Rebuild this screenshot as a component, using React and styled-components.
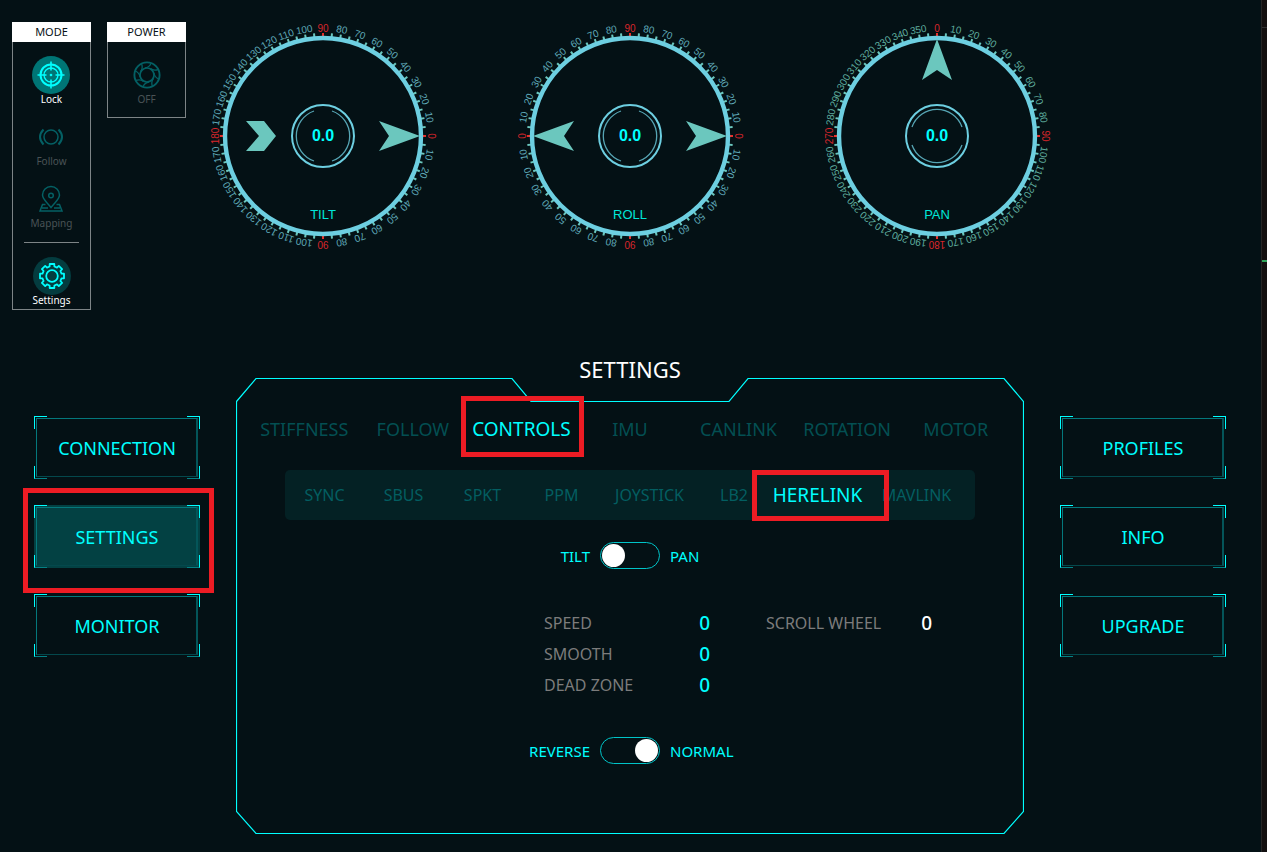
import React, { useState } from "react";
import styled, { createGlobalStyle } from "styled-components";

const CYAN = "#00ffff";
const RING = "#6dcfe1";
const ARROW = "#6bc7be";

// labels run clockwise from the top, one every 10 degrees
const TILT_LABELS = [
  90, 80, 70, 60, 50, 40, 30, 20, 10, 0, 10, 20, 30, 40, 50, 60, 70, 80, 90,
  100, 110, 120, 130, 140, 150, 160, 170, 180, 170, 160, 150, 140, 130, 120, 110, 100,
];
const ROLL_LABELS = [
  90, 80, 70, 60, 50, 40, 30, 20, 10, 0, 10, 20, 30, 40, 50, 60, 70, 80, 90,
  80, 70, 60, 50, 40, 30, 20, 10, 0, 10, 20, 30, 40, 50, 60, 70, 80,
];
const PAN_LABELS = Array.from({ length: 36 }, (_, i) => i * 10);

const Dial = ({ name, value, labels, labelColor, vertical, children }) => (
  <DialSvg viewBox="-120 -120 240 240" role="img" aria-label={name}>
    {Array.from({ length: 72 }, (_, i) => (
      <line
        key={i}
        y1={-103}
        y2={-99}
        stroke={i % 18 === 0 ? "#e8302a" : ARROW}
        strokeWidth={2}
        transform={`rotate(${i * 5})`}
      />
    ))}
    <circle r={98} fill="none" stroke={RING} strokeWidth={4.4} />
    {labels.map((label, i) => (
      <text
        key={i}
        y={-104.5}
        textAnchor="middle"
        fontSize={10}
        fill={i % 9 === 0 ? "#d8262c" : labelColor}
        transform={`rotate(${i * 10})`}
      >
        {label}
      </text>
    ))}
    {children}
    <circle r={31} fill="none" stroke={RING} strokeWidth={2} />
    <g fill="none" stroke="#56a5b4" strokeWidth={1.3} transform={vertical ? "rotate(90)" : undefined}>
      <path d="M-9 -25 A26.5 26.5 0 0 0 -9 25" />
      <path d="M9 -25 A26.5 26.5 0 0 1 9 25" />
    </g>
    <text y={5} textAnchor="middle" fontSize={16} fontWeight="bold" fill={CYAN}>
      {value}
    </text>
    <text y={83} textAnchor="middle" fontSize={13} fill="#00e6d8">
      {name}
    </text>
  </DialSvg>
);

const Arrow = ({ angle }) => (
  <path d="M0 -97 L15 -56 L0 -66 L-15 -56 Z" fill={ARROW} transform={`rotate(${angle})`} />
);

const LockIcon = () => (
  <Icon viewBox="0 0 28 28">
    <circle cx="14" cy="14" r="10.5" strokeWidth="2" />
    <circle cx="14" cy="14" r="7" strokeWidth="1.3" />
    <path d="M14 .5v9M14 18.500v9M.5 14h9M18.500 14h9" strokeWidth="1.600" />
    <circle cx="14" cy="14" r=".6" />
  </Icon>
);

const FollowIcon = () => (
  <Icon viewBox="0 0 28 28">
    <circle cx="14" cy="14" r="7" />
    <path d="M6.500 6.500Q-.5 14 6.500 21.500M21.500 6.500Q28.500 14 21.500 21.500" strokeWidth="2" />
  </Icon>
);

const MappingIcon = () => (
  <Icon viewBox="0 0 28 28">
    <path d="M14 22.500C9 16 5.500 14 5.500 10a8.500 8.500 0 0 1 17 0C22.500 14 19 16 14 22.500Z" />
    <circle cx="14" cy="10.5" r="2.3" />
    <path d="M8.500 19.500H5.500L3 26h22l-2.500-6.500h-3M5 23h6M17 23h6" />
  </Icon>
);

// eight teeth, four corners each
const GEAR = Array.from({ length: 8 }, (_, i) =>
  [[9.8, -14], [12.2, -11], [12.2, 11], [9.8, 14]]
    .map(([r, offset]) => {
      const a = ((i * 45 + offset) * Math.PI) / 180;
      return `${(14 + r * Math.sin(a)).toFixed(1)},${(14 - r * Math.cos(a)).toFixed(1)}`;
    })
    .join(" ")
).join(" ");

const GearIcon = () => (
  <Icon viewBox="0 0 28 28">
    <circle cx="14" cy="14" r="5.8" strokeWidth="1.8" />
    <polygon points={GEAR} strokeWidth="1.8" strokeLinejoin="round" />
  </Icon>
);

const PowerIcon = () => (
  <Icon viewBox="0 0 28 28">
    <circle cx="14" cy="14" r="12.6" strokeWidth="1.9" />
    <circle cx="14" cy="14" r="7" strokeWidth="1.7" />
    {[0, 45, 90, 135, 180, 225, 270, 315].map((angle) => (
      <path key={angle} d="M12 7Q16 6.500 18 2.500" strokeWidth="1.3" transform={`rotate(${angle} 14 14)`} />
    ))}
  </Icon>
);

const MODES = [
  { name: "Lock", icon: <LockIcon />, glow: "#007575" },
  { name: "Follow", icon: <FollowIcon /> },
  { name: "Mapping", icon: <MappingIcon /> },
];

const TABS = ["STIFFNESS", "FOLLOW", "CONTROLS", "IMU", "CANLINK", "ROTATION", "MOTOR"];
const SOURCES = ["SYNC", "SBUS", "SPKT", "PPM", "JOYSTICK", "LB2", "HERELINK", "MAVLINK"];
const VALUES = ["SPEED", "SMOOTH", "DEAD ZONE"];

const Frame = ({ label, active }) => (
  <FrameButton type="button" $active={active}>
    <Corners aria-hidden="true">
      <i />
      <i />
      <i />
      <i />
    </Corners>
    {label}
    {active && <Highlight $inset="-17px -14px -25px -11px" />}
  </FrameButton>
);

const Toggle = ({ id, left, right, initial }) => {
  const [on, setOn] = useState(initial);
  return (
    <ToggleRow>
      <ToggleText htmlFor={id} $end>{left}</ToggleText>
      <Switch id={id} type="checkbox" role="switch" checked={on} onChange={() => setOn(!on)} />
      <ToggleText htmlFor={id}>{right}</ToggleText>
    </ToggleRow>
  );
};

export default function App() {
  const [tab, setTab] = useState("CONTROLS");
  const [source, setSource] = useState("HERELINK");

  return (
    <>
      <GlobalStyle />
      <Page>
        <Top>
          <Panels>
            <Panel>
              <PanelTitle>MODE</PanelTitle>
              <ModeList>
                {MODES.map((mode) => (
                  <ModeButton key={mode.name} type="button" $active={!!mode.glow}>
                    <IconDisc $glow={mode.glow}>{mode.icon}</IconDisc>
                    {mode.name}
                  </ModeButton>
                ))}
              </ModeList>
              <Divider />
              <ModeButton type="button" $active>
                <IconDisc $glow="#043c3f"><GearIcon /></IconDisc>
                Settings
              </ModeButton>
            </Panel>
            <Panel $short>
              <PanelTitle>POWER</PanelTitle>
              <ModeList>
                <ModeButton type="button">
                  <IconDisc><PowerIcon /></IconDisc>
                  OFF
                </ModeButton>
              </ModeList>
            </Panel>
          </Panels>
          <Dials>
            <Dial name="TILT" value="0.0" labels={TILT_LABELS} labelColor="#5fa9b8">
              <Arrow angle={90} />
              <path d="M-77 -15h18l12 15-12 15h-18l13-15Z" fill={ARROW} />
            </Dial>
            <Dial name="ROLL" value="0.0" labels={ROLL_LABELS} labelColor="#5fa9b8">
              <Arrow angle={90} />
              <Arrow angle={270} />
            </Dial>
            <Dial name="PAN" value="0.0" labels={PAN_LABELS} labelColor="#5fae9f" vertical>
              <Arrow angle={0} />
            </Dial>
          </Dials>
        </Top>
        <Main>
          <SideNav aria-label="Device">
            <Frame label="CONNECTION" />
            <Frame label="SETTINGS" active />
            <Frame label="MONITOR" />
          </SideNav>
          <Settings>
            <Title>SETTINGS</Title>
            <Outline viewBox="0 0 788 458" preserveAspectRatio="none" aria-hidden="true">
              <path d="M.5 24.500L20 1.500H276L295 24.500H493L512 1.500H768L787.500 24.500V434.500L768 456.500H20L.5 434.500Z" />
            </Outline>
            <Tabs>
              {TABS.map((name) => (
                <Tab key={name} type="button" $active={name === tab} onClick={() => setTab(name)}>
                  {name}
                  {name === "CONTROLS" && <Highlight $inset="-19px -8px -14px -6px" />}
                </Tab>
              ))}
            </Tabs>
            <Sources>
              {SOURCES.map((name) => (
                <Source key={name} type="button" $active={name === source} onClick={() => setSource(name)}>
                  {name}
                  {name === "HERELINK" && <Highlight $inset="-11px -24px -12px -18px" />}
                </Source>
              ))}
            </Sources>
            <Toggle id="axis" left="TILT" right="PAN" initial={false} />
            <Values>
              <ValueList>
                {VALUES.map((name) => (
                  <ValueRow key={name}>
                    <dt>{name}</dt>
                    <dd>0</dd>
                  </ValueRow>
                ))}
              </ValueList>
              <ValueList>
                <ValueRow $plain>
                  <dt>SCROLL WHEEL</dt>
                  <dd>0</dd>
                </ValueRow>
              </ValueList>
            </Values>
            <Toggle id="direction" left="REVERSE" right="NORMAL" initial />
          </Settings>
          <SideNav aria-label="System">
            <Frame label="PROFILES" />
            <Frame label="INFO" />
            <Frame label="UPGRADE" />
          </SideNav>
        </Main>
        <Edge />
      </Page>
    </>
  );
}

const GlobalStyle = createGlobalStyle`
  * {
    box-sizing: border-box;
  }
  body {
    margin: 0;
    background: #041115;
    color: #fff;
    font-family: "Noto Sans", Tahoma, sans-serif;
  }
  button {
    font-family: inherit;
    padding: 0;
    border: none;
    background: none;
    cursor: pointer;
  }
`;

const Page = styled.div`
  position: relative;
  min-height: 100vh;
  padding: 16px 41px 16px 12px;
`;

/* strip of the neighbouring window */
const Edge = styled.div`
  position: absolute;
  top: 0;
  right: 0;
  bottom: 0;
  width: 6px;
  border-left: 1px solid #252525;
  background:
    linear-gradient(#2fa35a, #2fa35a) 0 260px / 100% 2px no-repeat,
    linear-gradient(#303030, #303030) 0 27px / 100% 1px no-repeat,
    #131010;
`;

const Top = styled.header`
  display: flex;
  align-items: flex-start;
  height: 344px;
`;

const Panels = styled.div`
  display: flex;
  align-items: flex-start;
  gap: 16px;
  padding-top: 6px;
`;

const Panel = styled.section`
  display: flex;
  flex-direction: column;
  align-items: center;
  width: 79px;
  height: ${(p) => (p.$short ? "96px" : "288px")};
  border: 1px solid #7d8486;
`;

const PanelTitle = styled.h2`
  align-self: stretch;
  margin: -1px -1px 0;
  background: #fff;
  color: #071216;
  font-size: 11px;
  font-weight: 400;
  line-height: 20px;
  text-align: center;
`;

const ModeList = styled.div`
  display: flex;
  flex-direction: column;
  gap: 14px;
  padding-top: 14px;
`;

const ModeButton = styled.button`
  display: flex;
  flex-direction: column;
  align-items: center;
  color: ${(p) => (p.$active ? "#fff" : "#4a5355")};
  font-size: 10px;
  line-height: 10px;
  svg {
    color: ${(p) => (p.$active ? CYAN : "#046064")};
  }
`;

const IconDisc = styled.span`
  display: grid;
  place-items: center;
  width: 38px;
  height: 38px;
  border-radius: 50%;
  background: ${(p) => p.$glow || "transparent"};
`;

const Icon = styled.svg`
  width: 28px;
  height: 28px;
  fill: none;
  stroke: currentColor;
  stroke-width: 1.5;
`;

const Divider = styled.hr`
  width: 55px;
  margin: 14px 0;
  border: 0;
  border-top: 1px solid #7d8486;
`;

const Dials = styled.div`
  display: flex;
  flex: 1;
  justify-content: space-between;
  margin: 0 169px 0 17px;
`;

const DialSvg = styled.svg`
  width: 240px;
  height: 240px;
  font-family: "Liberation Sans", Arial, sans-serif;
`;

const Main = styled.main`
  display: flex;
  justify-content: space-between;
  align-items: flex-start;
  padding-left: 22px;
`;

const SideNav = styled.nav`
  display: flex;
  flex-direction: column;
  gap: 26px;
  width: 166px;
  padding-top: 56px;
`;

const FrameButton = styled.button`
  position: relative;
  height: 63px;
  color: ${CYAN};
  font-size: 18px;
  background: ${(p) => (p.$active ? "#034143" : "transparent")};
  &::before {
    content: "";
    position: absolute;
    inset: 2px;
    border: 1px solid #04787c;
    border-right: 2px solid #045559;
    border-bottom-color: #04484c;
  }
`;

const Corners = styled.span`
  i {
    position: absolute;
    width: 13px;
    height: 13px;
    border: 0 solid ${CYAN};
  }
  i:nth-child(1) {
    top: 0;
    left: 0;
    border-width: 1px 0 0 1px;
  }
  i:nth-child(2) {
    top: 0;
    right: 0;
    border-width: 1px 1px 0 0;
  }
  i:nth-child(3) {
    bottom: 0;
    left: 0;
    border-width: 0 0 1px 1px;
    border-bottom-color: #038084;
  }
  i:nth-child(4) {
    right: 0;
    bottom: 0;
    border-width: 0 1px 1px 0;
    border-bottom-color: #038084;
  }
`;

const Highlight = styled.span`
  position: absolute;
  z-index: 1;
  inset: ${(p) => p.$inset};
  border: 5px solid #ed1c24;
  pointer-events: none;
`;

const Settings = styled.section`
  position: relative;
  display: flex;
  flex: 0 1 788px;
  flex-direction: column;
  align-items: center;
`;

const Outline = styled.svg`
  position: absolute;
  top: 17px;
  left: 0;
  width: 100%;
  height: 458px;
  fill: none;
  stroke: ${CYAN};
  stroke-width: 1.2;
  pointer-events: none;
`;

const Title = styled.h1`
  margin: 0;
  font-size: 22px;
  font-weight: 400;
  line-height: 18px;
`;

const Tabs = styled.div`
  display: grid;
  grid-template-columns: repeat(7, 1fr);
  align-self: stretch;
  margin: 37px 14px 27px;
`;

const Tab = styled.button`
  position: relative;
  color: ${(p) => (p.$active ? CYAN : "#034f52")};
  font-size: ${(p) => (p.$active ? "19px" : "18px")};
  line-height: 28px;
`;

const Sources = styled.div`
  display: grid;
  grid-template-columns: 79fr 79fr 79fr 79fr 97fr 72fr 95fr 103fr;
  align-items: center;
  align-self: stretch;
  height: 50px;
  margin: 0 49px;
  padding-right: 7px;
  border-radius: 5px;
  background: #042124;
`;

const Source = styled.button`
  position: relative;
  color: ${(p) => (p.$active ? CYAN : "#035e61")};
  font-size: ${(p) => (p.$active ? "19px" : "16px")};
  line-height: 28px;
`;

const ToggleRow = styled.div`
  display: grid;
  grid-template-columns: 1fr 60px 1fr;
  gap: 10px;
  align-items: center;
  align-self: stretch;
  margin-top: 22px;
`;

const ToggleText = styled.label`
  color: ${CYAN};
  font-size: 15px;
  line-height: 20px;
  text-align: ${(p) => (p.$end ? "right" : "left")};
`;

const Switch = styled.input`
  appearance: none;
  width: 60px;
  height: 27px;
  margin: 0;
  padding: 1px;
  border: 1px solid #00c4c8;
  border-radius: 14px;
  cursor: pointer;
  &::before {
    content: "";
    display: block;
    width: 23px;
    height: 23px;
    border-radius: 50%;
    background: #fff;
  }
  &:checked::before {
    margin-left: auto;
  }
`;

const Values = styled.div`
  display: flex;
  gap: 56px;
  align-self: stretch;
  margin: 39px 0 14px;
  padding-left: 308px;
`;

const ValueList = styled.dl`
  width: 166px;
  margin: 0;
`;

const ValueRow = styled.div`
  display: flex;
  justify-content: space-between;
  color: #7c7c7c;
  font-size: 16px;
  line-height: 31px;
  dt {
    white-space: nowrap;
  }
  dd {
    margin: 0;
    color: ${(p) => (p.$plain ? "#fff" : CYAN)};
    font-size: 19px;
    font-weight: 500;
  }
`;
